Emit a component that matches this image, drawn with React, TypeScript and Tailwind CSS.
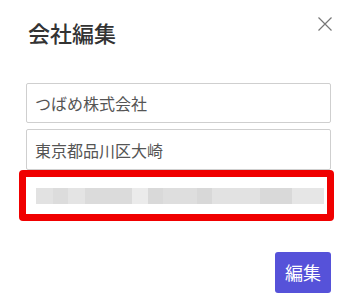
const blurSegments: { w: number; c: string }[] = [
  { w: 17, c: 'bg-[#e2e2e2]' },
  { w: 15, c: 'bg-[#dcdcdc]' },
  { w: 17, c: 'bg-[#e4e4e4]' },
  { w: 47, c: 'bg-[#dbdbdb]' },
  { w: 16, c: 'bg-[#ebebeb]' },
  { w: 15, c: 'bg-[#d9d9d9]' },
  { w: 34, c: 'bg-[#dedede]' },
  { w: 15, c: 'bg-[#d8d8d8]' },
  { w: 48, c: 'bg-[#e2e2e2]' },
  { w: 32, c: 'bg-[#d9d9d9]' },
  { w: 32, c: 'bg-[#e6e6e6]' },
];

const font = { fontFamily: '"Noto Sans CJK JP", "Noto Sans", sans-serif' };

export default function App() {
  return (
    <div className="h-[305px] w-[354px] bg-white pl-[26px] pr-[23px] pt-[16px]" style={font}>
      <div className="flex items-start justify-between">
        <h2 className="ml-[2px] text-[22px] leading-[32px] font-medium text-[#333]">会社編集</h2>
        <button className="mr-[-1px] mt-[1px] text-[#777]" aria-label="閉じる">
          <svg width="14" height="14" viewBox="0 0 14 14" fill="none" stroke="currentColor" strokeWidth="1.2">
            <path d="M0.5 0.5 L13.5 13.5 M13.5 0.5 L0.5 13.5" />
          </svg>
        </button>
      </div>

      <div className="mt-[35px] flex flex-col gap-[6px]">
        <div className="flex h-[40px] items-center rounded-[2px] border border-[#cfcfcf] px-[8px] text-[16px] text-[#555]">
          つばめ株式会社
        </div>
        <div className="flex h-[41px] items-center rounded-[2px] border border-[#cfcfcf] px-[8px] text-[16px] text-[#555]">
          東京都品川区大崎
        </div>
      </div>

      <div className="-ml-[7px] -mr-[3px] flex h-[51px] items-center rounded-[4px] border-[7px] border-[#f00000] bg-white pl-[10px] pr-[3px]">
        <div className="flex h-[16px] w-full">
          {blurSegments.map((s, i) => (
            <div key={i} className={s.c} style={{ width: s.w }} />
          ))}
        </div>
      </div>

      <div className="mt-[31px] flex justify-end">
        <button className="h-[41px] w-[56px] rounded-[3px] bg-[#5652d9] text-[18px] text-white">
          編集
        </button>
      </div>
    </div>
  );
}
